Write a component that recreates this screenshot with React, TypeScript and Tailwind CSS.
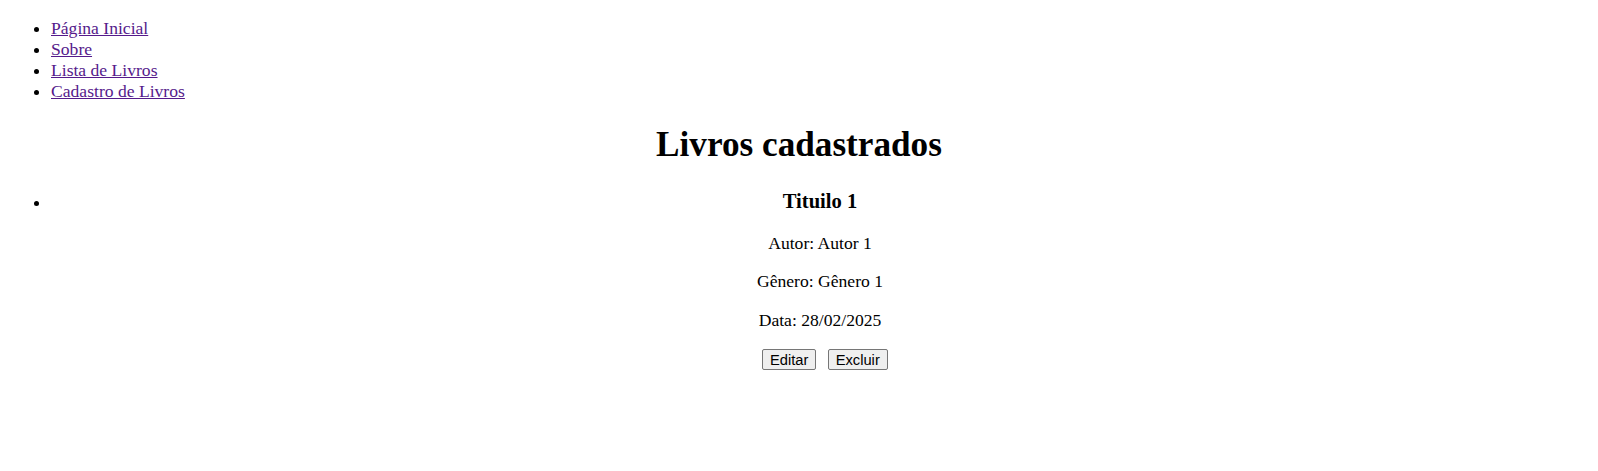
const links = ["Página Inicial", "Sobre", "Lista de Livros", "Cadastro de Livros"];

const livros = [{ titulo: "Tituilo 1", autor: "Autor 1", genero: "Gênero 1", data: "28/02/2025" }];

export default function App() {
  return (
    <div className="min-h-[471px] bg-white px-[9px] pt-[17.5px] text-black font-['Liberation_Serif',_'Times_New_Roman',_serif] text-[17.6px] leading-[21px]">
      <nav>
        <ul className="list-disc pl-[42px]">
          {links.map((l) => (
            <li key={l}>
              <a href="#" className="text-[#551a8b] underline">
                {l}
              </a>
            </li>
          ))}
        </ul>
      </nav>

      <h1 className="mt-[23.6px] text-center text-[35.2px] font-bold leading-[40.5px]">Livros cadastrados</h1>

      <ul className="mt-[24.8px] list-disc pl-[42px]">
        {livros.map((livro) => (
          <li key={livro.titulo} className="text-center">
            <h3 className="text-[20.6px] font-bold leading-[23.7px]">{livro.titulo}</h3>
            <p className="mt-[18.6px]">Autor: {livro.autor}</p>
            <p className="mt-[17.6px]">Gênero: {livro.genero}</p>
            <p className="mt-[17.6px]">Data: {livro.data}</p>
            <div className="mt-[18px] flex justify-center gap-[1.5px]">
              <button className="ml-[10px] h-[21px] w-[54px] rounded-[2px] border border-[#767676] bg-[#efefef] font-['Liberation_Sans',_Arial,_sans-serif] text-[14.7px] leading-[20px]">
                Editar
              </button>
              <button className="ml-[10px] h-[21px] w-[60px] rounded-[2px] border border-[#767676] bg-[#efefef] font-['Liberation_Sans',_Arial,_sans-serif] text-[14.7px] leading-[20px]">
                Excluir
              </button>
            </div>
          </li>
        ))}
      </ul>
    </div>
  );
}
